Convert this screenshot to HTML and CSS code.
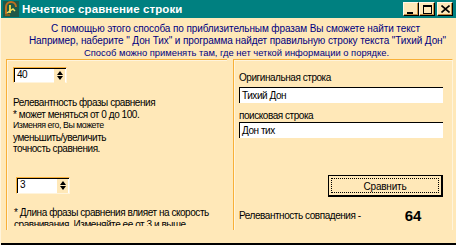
FILE: index.html
```html
<!DOCTYPE html>
<html lang="ru">
<head>
<meta charset="utf-8">
<title>Нечеткое сравнение строки</title>
<link rel="stylesheet" href="styles.css">
</head>
<body>
<div class="window">
  <div class="titlebar">
    <svg class="app-icon" width="16" height="16" viewBox="0 0 16 16">
      <rect x="0" y="0" width="16" height="16" fill="#205848"/>
      <path d="M3 14 V6 A5 5 0 0 1 13 6" fill="none" stroke="#c07020" stroke-width="2"/>
      <rect x="6" y="4" width="2" height="8" fill="#e8d040"/>
      <path d="M4 12 L10 8 L12 10" fill="none" stroke="#f0e060" stroke-width="1.5"/>
      <rect x="2" y="13" width="5" height="2" fill="#806020"/>
    </svg>
    <span class="title-text">Нечеткое сравнение строки</span>
    <div class="win-buttons">
      <span class="wbtn"><span class="g-min"></span></span>
      <span class="wbtn"><span class="g-max"></span></span>
      <span class="wbtn close"><svg width="9" height="8" viewBox="0 0 9 8"><path d="M0.5 0.5 L8.5 7.5 M8.5 0.5 L0.5 7.5" stroke="#000" stroke-width="1.6"/></svg></span>
    </div>
  </div>
  <div class="intro">
    <p class="l1">С помощью этого способа по приблизительным фразам Вы сможете найти текст</p>
    <p class="l2">Например, наберите " Дон Тих" и программа найдет правильную строку текста "Тихий Дон"</p>
    <p class="l3">Способ можно применять там, где нет четкой информации о порядке.</p>
  </div>
  <div class="panels">
    <div class="panel left">
      <div class="spin">
        <span class="spin-val">40</span>
        <span class="spin-btns"><span class="up"></span><span class="down"></span></span>
      </div>
      <div class="help">
        <p>Релевантность фразы сравнения</p>
        <p>* может меняться от 0 до 100.</p>
        <p class="small">Изменяя его, Вы можете</p>
        <p>уменьшить/увеличить</p>
        <p>точность сравнения.</p>
      </div>
      <div class="spin spin2">
        <span class="spin-val">3</span>
        <span class="spin-btns"><span class="up"></span><span class="down"></span></span>
      </div>
      <div class="help help2">
        <p>* Длина фразы сравнения влияет на скорость</p>
        <p>сравнивания. Изменяйте ее от 3 и выше</p>
      </div>
    </div>
    <div class="panel right">
      <p class="label">Оригинальная строка</p>
      <div class="field">Тихий Дон</div>
      <p class="label label2">поисковая строка</p>
      <div class="field">Дон тих</div>
      <div class="btn-row">
        <button class="btn"><span class="focus">Сравнить</span></button>
      </div>
      <div class="result">
        <span>Релевантность совпадения -</span>
        <span class="score">64</span>
      </div>
    </div>
  </div>
  <div class="bottom"></div>
</div>
</body>
</html>
```
FILE: styles.css
```css
* { box-sizing: border-box; }
html, body { margin: 0; padding: 0; }
body {
  width: 456px;
  height: 245px;
  overflow: hidden;
  background: #ffe8b8;
  font-family: "Liberation Sans", Arial, sans-serif;
  font-size: 10px;
  color: #000;
}
p { margin: 0; }
.window {
  width: 456px;
  height: 245px;
  background: #ffe8b8;
  border-left: 1px solid #fff4dc;
  display: flex;
  flex-direction: column;
  overflow: hidden;
}
.titlebar {
  height: 18px;
  flex: none;
  background: #008080;
  display: flex;
  align-items: center;
  padding-left: 2px;
  padding-right: 3px;
}
.app-icon { flex: none; margin-right: 3px; }
.title-text {
  color: #fff;
  font-weight: bold;
  font-size: 11.5px;
  letter-spacing: 0.1px;
  flex: 1;
}
.win-buttons { display: flex; align-items: center; }
.wbtn {
  width: 16px;
  height: 14px;
  background: #ffe8b8;
  border-top: 1px solid #fff8e8;
  border-left: 1px solid #fff8e8;
  border-right: 1px solid #000;
  border-bottom: 1px solid #000;
  box-shadow: inset -1px -1px 0 #c89040;
  display: flex;
  align-items: center;
  justify-content: center;
}
.wbtn.close { margin-left: 2px; }
.g-min { width: 6px; height: 2px; background: #000; margin-top: 7px; margin-right: 2px; }
.g-max { width: 9px; height: 9px; border: 1px solid #000; border-top-width: 2px; }
.intro {
  color: #000080;
  text-align: center;
  padding-top: 5px;
  height: 41px;
  flex: none;
}
.intro .l1 { font-size: 10px; letter-spacing: -0.1px; line-height: 12px; padding-left: 14px; }
.intro .l2 { font-size: 10px; letter-spacing: -0.1px; line-height: 12px; padding-left: 18px; }
.intro .l3 { font-size: 9.4px; line-height: 11px; padding-left: 16px; }
.panels {
  display: flex;
  gap: 6px;
  padding-left: 5px;
  height: 171px;
  flex: none;
  overflow: hidden;
  align-items: flex-start;
}
.panel {
  height: 220px;
  border-top: 1px solid #f8b038;
  border-left: 1px solid #f8b038;
  box-shadow: inset 1px 1px 0 #fff4dc;
  flex: none;
  letter-spacing: -0.45px;
}
.panel.left { width: 221px; padding: 7px 0 0 6px; }
.panel.right { width: 220px; padding: 7px 9px 0 5px; border-right: 1px solid #fff4dc; }
.spin {
  width: 54px;
  height: 16px;
  background: #fff;
  border-top: 1px solid #f8b038;
  border-left: 1px solid #f8b038;
  border-right: 1px solid #fff4dc;
  border-bottom: 1px solid #fff4dc;
  box-shadow: inset 1px 1px 0 #000;
  display: flex;
  align-items: center;
}
.spin-val { flex: 1; padding-left: 3px; font-size: 10px; line-height: 14px; }
.spin-btns { width: 11px; height: 14px; display: flex; flex-direction: column; align-items: center; justify-content: center; gap: 1px; background: #ffe8b8; margin-right: 1px; margin-top: 1px; }
.spin-btns .up { width: 0; height: 0; border-left: 3px solid transparent; border-right: 3px solid transparent; border-bottom: 4px solid #000; }
.spin-btns .down { width: 0; height: 0; border-left: 3px solid transparent; border-right: 3px solid transparent; border-top: 4px solid #000; }
.help { margin-top: 14px; font-size: 10px; line-height: 11.6px; }
.help .small { font-size: 8.8px; }
.spin2 { margin-top: 22px; margin-left: 3px; height: 17px; }
.help2 { margin-top: 13px; padding-left: 1px; white-space: nowrap; height: 19px; overflow: hidden; }
.label { font-size: 10px; line-height: 12px; margin-top: 5px; }
.field {
  margin-top: 3px;
  height: 16px;
  background: #fff;
  border-left: 1px solid #000;
  border-top: 1px solid #000;
  font-size: 10px;
  line-height: 15px;
  padding-left: 2px;
}
.label2 { margin-top: 7px; }
.label2 + .field { margin-top: 0; }
.btn-row { display: flex; justify-content: flex-end; margin-top: 37px; }
.btn {
  width: 115px;
  height: 22px;
  padding: 2px;
  background: #ffe8b8;
  border-top: 1px solid #000;
  border-left: 1px solid #000;
  border-right: 2px solid #000;
  border-bottom: 2px solid #000;
  font-family: inherit;
  font-size: 10px;
  letter-spacing: -0.2px;
  display: flex;
}
.focus {
  flex: 1;
  border: 1px dotted #000;
  display: flex;
  align-items: center;
  justify-content: center;
  padding-top: 1px;
}
.result { display: flex; align-items: center; margin-top: 10px; font-size: 10px; white-space: nowrap; }
.score { font-weight: bold; font-size: 15px; margin-left: 44px; letter-spacing: 0; }
.bottom {
  flex: 1;
  border-bottom: 2px solid #000;
}
```
